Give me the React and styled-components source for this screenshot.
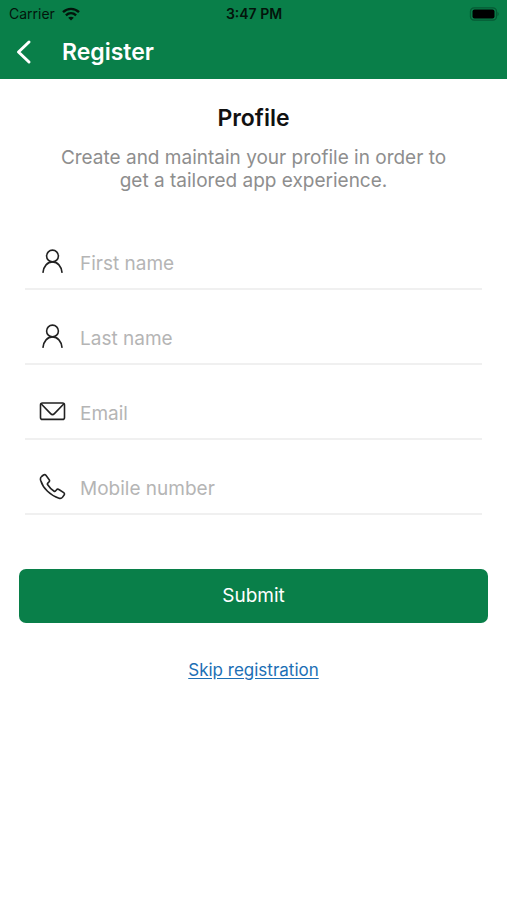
import { useState } from "react";
import styled, { createGlobalStyle } from "styled-components";

const GlobalStyle = createGlobalStyle`
  * {
    box-sizing: border-box;
  }
  body {
    margin: 0;
    background: #fff;
    font-family: Inter, "Liberation Sans", sans-serif;
  }
`;

const Header = styled.header`
  background: #097f49;
`;

const StatusBar = styled.div`
  display: grid;
  grid-template-columns: 1fr auto 1fr;
  align-items: center;
  height: 27px;
  padding: 0 8px 0 9px;
  font-size: 14px;
  line-height: 18px;
  color: #03140b;
`;

const Carrier = styled.div`
  display: flex;
  align-items: center;
  gap: 7px;
`;

const Clock = styled.time`
  font-weight: 600;
`;

const BatteryIcon = styled.svg`
  justify-self: end;
`;

const NavBar = styled.div`
  display: flex;
  align-items: center;
  gap: 24px;
  height: 52px;
  padding: 0 10px 2px;
`;

const BackButton = styled.button`
  display: flex;
  padding: 2px 0;
  border: none;
  background: none;
  color: #fff;
  cursor: pointer;
`;

const NavTitle = styled.h1`
  margin: 0;
  font-size: 23px;
  font-weight: 600;
  line-height: 28px;
  color: #fff;
`;

const Content = styled.main`
  display: flex;
  flex-direction: column;
  padding: 24px 19px;
  text-align: center;
`;

const Title = styled.h2`
  margin: 0;
  font-size: 23px;
  font-weight: 600;
  line-height: 30px;
  color: #111;
`;

const Intro = styled.p`
  max-width: 400px;
  margin: 13px auto 0;
  font-size: 19px;
  line-height: 23px;
  color: #8e8e8e;
`;

const Form = styled.form`
  display: flex;
  flex-direction: column;
`;

const Fields = styled.div`
  display: flex;
  flex-direction: column;
  margin: 23px 6px 0;
`;

const Field = styled.label`
  display: flex;
  align-items: center;
  gap: 14px;
  height: 75px;
  padding: 20px 0 0 14px;
  border-bottom: 2px solid #f0f0f0;
  color: #222;
`;

const FieldIcon = styled.svg`
  flex: none;
  fill: none;
  stroke: currentColor;
  stroke-linecap: round;
  stroke-linejoin: round;
`;

const Input = styled.input`
  flex: 1;
  min-width: 0;
  padding: 4px 0 0;
  border: none;
  outline: none;
  background: none;
  font-family: inherit;
  font-size: 19px;
  line-height: 24px;
  color: #222;

  &::placeholder {
    color: #b5b5b5;
    opacity: 1;
  }
`;

const SubmitButton = styled.button`
  height: 54px;
  margin-top: 54px;
  border: none;
  border-radius: 7px;
  background: #097f49;
  font-family: inherit;
  font-size: 19px;
  line-height: 24px;
  color: #fff;
  cursor: pointer;
`;

const SkipLink = styled.a`
  align-self: center;
  margin-top: 36px;
  font-size: 17px;
  line-height: 22px;
  color: #1c6fb5;
  text-decoration: underline;
  text-underline-offset: 2px;
`;

function PersonIcon() {
  return (
    <FieldIcon width="27" height="27" viewBox="0 0 27 27" strokeWidth="1.6">
      <circle cx="13.5" cy="8" r="5.9" />
      <path d="M4 24.3c.7-6 4.3-10.4 9.5-10.4s8.8 4.4 9.5 10.4" />
    </FieldIcon>
  );
}

function MailIcon() {
  return (
    <FieldIcon width="27" height="27" viewBox="0 0 27 27" strokeWidth="1.6">
      <rect x="1.5" y="5" width="24" height="16.4" rx="2" />
      <path d="M2.3 6l9.3 9.6c1.1 1.1 2.7 1.1 3.8 0L24.7 6" />
    </FieldIcon>
  );
}

function PhoneIcon() {
  return (
    <FieldIcon width="27" height="27" viewBox="0 0 27 27" strokeWidth="1.6">
      <path d="M2.6 3.5 4.5 2c.8-.6 1.8-.5 2.4.3l3.3 4.5c.6.9.4 1.7-.4 2.4l-1 .9c-.6.6-.5 1.1-.1 1.7 1.6 2.5 3.6 4.6 6.1 6.2.7.5 1.3.5 1.9-.2l.9-1c.6-.8 1.5-.9 2.3-.3l4.8 3.2c.9.6 1 1.5.4 2.3l-1.5 2.1c-.8 1.1-2 1.5-3.6 1.1C11.5 22.7 4 15.3 1.6 7.2c-.4-1.6-.1-2.8 1-3.7z" />
    </FieldIcon>
  );
}

const fields = [
  { name: "firstName", label: "First name", type: "text", Icon: PersonIcon },
  { name: "lastName", label: "Last name", type: "text", Icon: PersonIcon },
  { name: "email", label: "Email", type: "email", Icon: MailIcon },
  { name: "mobile", label: "Mobile number", type: "tel", Icon: PhoneIcon },
];

function App() {
  const [profile, setProfile] = useState({});

  function handleChange(e) {
    setProfile({ ...profile, [e.target.name]: e.target.value });
  }

  function handleSubmit(e) {
    e.preventDefault();
  }

  return (
    <>
      <GlobalStyle />
      <Header>
        <StatusBar>
          <Carrier>
            Carrier
            <svg width="18" height="14" viewBox="0 0 18 14" fill="none">
              <path
                d="M1 5.2c4.6-4.4 11.4-4.4 16 0M3.9 8.3c3-2.8 7.2-2.8 10.2 0"
                stroke="#03140b"
                strokeWidth="2.4"
              />
              <path d="M9 13.6 6.2 10.8c1.7-1.4 3.9-1.4 5.6 0z" fill="#03140b" />
            </svg>
          </Carrier>
          <Clock>3:47 PM</Clock>
          <BatteryIcon width="30" height="14" viewBox="0 0 30 14">
            <rect
              x="1.5"
              y="0.8"
              width="26"
              height="12.4"
              rx="3.6"
              fill="none"
              stroke="#065a34"
              strokeWidth="1.3"
            />
            <rect x="3.5" y="2.6" width="22" height="8.8" rx="2" fill="#000" />
            <path d="M28.5 5v4c1.6-.8 1.6-3.2 0-4z" fill="#065a34" />
          </BatteryIcon>
        </StatusBar>
        <NavBar>
          <BackButton type="button" aria-label="Back">
            <svg width="28" height="26" viewBox="0 0 28 26" fill="none">
              <path
                d="M19 3 8.5 13 19 23"
                stroke="currentColor"
                strokeWidth="3"
                strokeLinecap="round"
                strokeLinejoin="round"
              />
            </svg>
          </BackButton>
          <NavTitle>Register</NavTitle>
        </NavBar>
      </Header>

      <Content>
        <Title>Profile</Title>
        <Intro>
          Create and maintain your profile in order to get a tailored app
          experience.
        </Intro>
        <Form onSubmit={handleSubmit}>
          <Fields>
            {fields.map(({ name, label, type, Icon }) => (
              <Field key={name}>
                <Icon />
                <Input
                  type={type}
                  name={name}
                  placeholder={label}
                  aria-label={label}
                  value={profile[name] || ""}
                  onChange={handleChange}
                />
              </Field>
            ))}
          </Fields>
          <SubmitButton type="submit">Submit</SubmitButton>
        </Form>
        <SkipLink href="#skip">Skip registration</SkipLink>
      </Content>
    </>
  );
}

export default App;
